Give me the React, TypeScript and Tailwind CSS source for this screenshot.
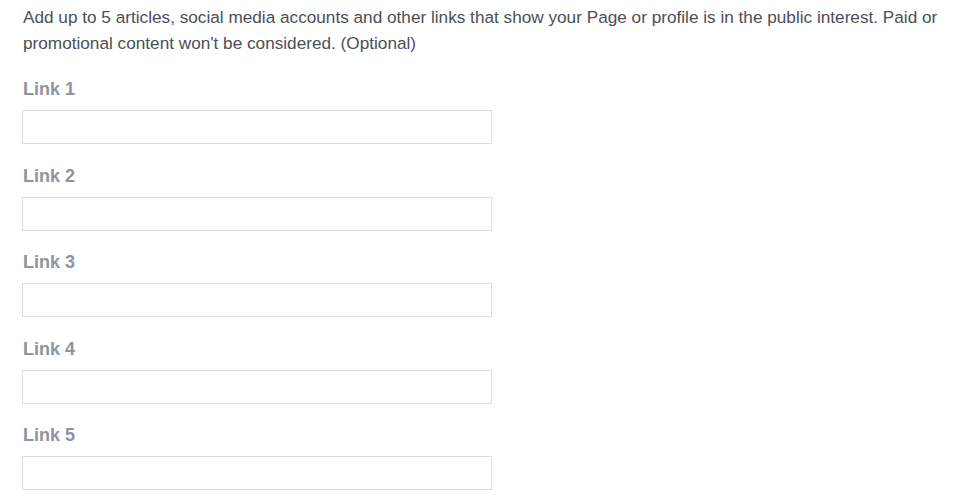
export default function App() {
  const links = [1, 2, 3, 4, 5]

  return (
    <div className="min-h-screen bg-white px-[22px] pt-[4px] font-['Liberation_Sans',Arial,sans-serif]">
      <p className="pl-[1px] text-[17.2px] leading-[26px] text-[#4b4f56]">
        Add up to 5 articles, social media accounts and other links that show your Page or profile is in the public interest. Paid or promotional content won't be considered. (Optional)
      </p>

      <div className="mt-[23px] flex flex-col gap-[21.5px]">
        {links.map(n => (
          <div key={n}>
            <label className="block pl-[1px] text-[18px] leading-[20px] font-bold text-[#90949c]">
              Link {n}
            </label>
            <input
              type="text"
              className="mt-[11px] block h-[34px] w-[470px] border border-[#dddfe2] bg-white px-2 outline-none"
            />
          </div>
        ))}
      </div>
    </div>
  )
}
